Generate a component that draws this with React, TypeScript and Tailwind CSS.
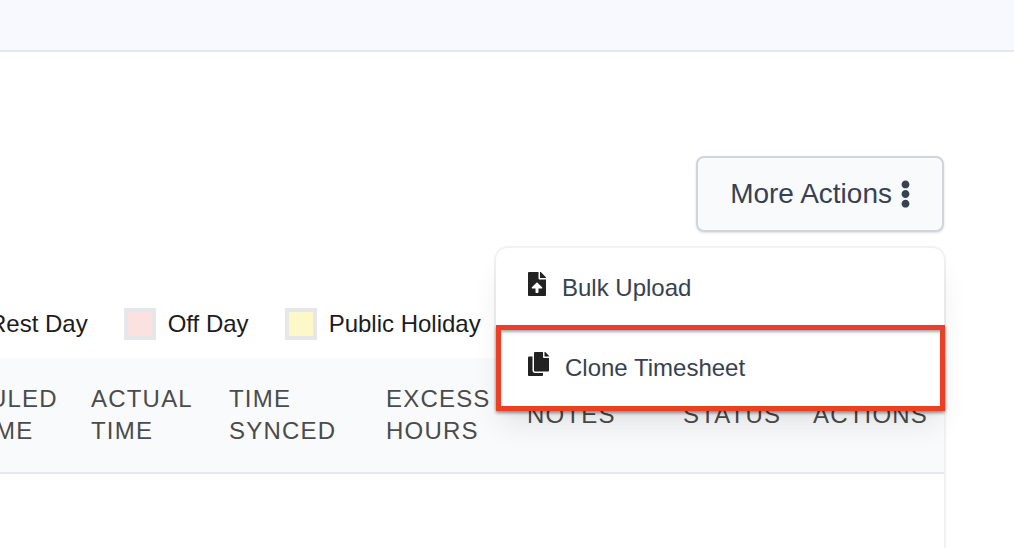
import { FaCopy, FaEllipsisV, FaFileUpload } from "react-icons/fa";

const legend = [
  { label: "Rest Day", swatch: "bg-[#e0effd]" },
  { label: "Off Day", swatch: "bg-[#fbe2e1]" },
  { label: "Public Holiday", swatch: "bg-[#fdf8c8]" },
];

const columns = [
  { label: "Scheduled Overtime", width: "w-[192px]" },
  { label: "Actual Time", width: "w-[138px]" },
  { label: "Time Synced", width: "w-[157px]" },
  { label: "Excess Hours", width: "w-[141px]" },
  { label: "Notes", width: "w-[156px]" },
  { label: "Status", width: "w-[130px]" },
  { label: "Actions", width: "w-auto" },
];

function ActionsMenu() {
  return (
    <div className="relative">
      <button
        type="button"
        className="flex h-[76px] items-center gap-2 rounded-lg border-2 border-[#d1d5db] bg-[#f9fafb] pl-8 pr-[31px] text-[28px] leading-10 text-[#374151] shadow-sm"
      >
        More Actions
        <FaEllipsisV className="h-7 w-[11px]" />
      </button>

      <div
        role="menu"
        className="absolute right-0 top-full z-10 mt-4 w-[448px] rounded-t-xl bg-white shadow-[0_0_0_2px_rgba(0,0,0,0.05),0_20px_30px_-6px_rgba(0,0,0,0.1),0_8px_12px_-4px_rgba(0,0,0,0.05)]"
      >
        <button
          type="button"
          role="menuitem"
          className="flex h-20 w-full items-center gap-4 px-8 text-2xl text-[#374151]"
        >
          <FaFileUpload className="mb-2 h-6 w-[18px] text-[#222222]" />
          Bulk Upload
        </button>
        <button
          type="button"
          role="menuitem"
          className="relative flex h-20 w-full items-center gap-4 px-8 text-2xl text-[#374151]"
        >
          <FaCopy className="mb-2 h-6 w-[21px] text-[#222222]" />
          Clone Timesheet
          {/* Highlight frame */}
          <span className="pointer-events-none absolute -inset-y-[3px] left-0 -right-px border-[5px] border-[#eb4025] shadow-[0_2px_3px_rgba(0,0,0,0.4),inset_0_3px_3px_-1px_rgba(0,0,0,0.35)]" />
        </button>
      </div>
    </div>
  );
}

export default function App() {
  return (
    <div className="flex h-screen flex-col overflow-hidden bg-white font-['Liberation_Sans',Arial,sans-serif]">
      <header className="h-[52px] shrink-0 border-b-2 border-[#e5e7eb] bg-[#f8f9fe]" />

      <main className="flex flex-1 flex-col pr-[70px] pt-[104px]">
        <div className="flex justify-end">
          <ActionsMenu />
        </div>

        <ul className="-ml-[55px] mt-[76px] flex gap-9 text-2xl text-[#1c1c1e]">
          {legend.map(({ label, swatch }) => (
            <li key={label} className="flex shrink-0 items-center gap-3">
              <span className={`size-8 border-4 border-[#e5e7eb] ${swatch}`} />
              {label}
            </li>
          ))}
        </ul>

        {/* Timesheet table, runs past the left edge */}
        <div className="-mb-4 -ml-[117px] mt-[18px] flex-1 bg-white shadow-[0_0_4px_rgba(0,0,0,0.16)] [clip-path:inset(0_-8px_0_0)]">
          <table className="w-full table-fixed border-collapse text-left">
            <thead className="bg-[#f9fafb]">
              <tr className="h-[115px] border-b-2 border-[#e5e7eb]">
                {columns.map(({ label, width }) => (
                  <th
                    key={label}
                    scope="col"
                    className={`${width} px-4 align-middle text-2xl font-normal uppercase tracking-wider text-[#4b4b4b]`}
                  >
                    {label}
                  </th>
                ))}
              </tr>
            </thead>
          </table>
        </div>
      </main>
    </div>
  );
}
